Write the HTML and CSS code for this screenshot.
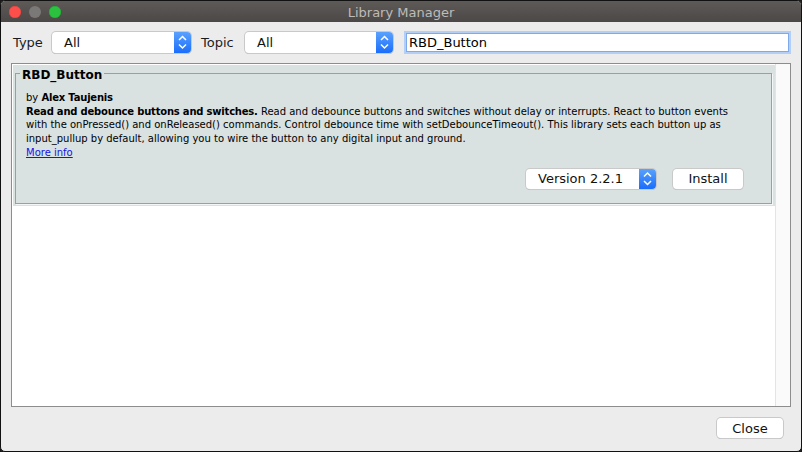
FILE: index.html
```html
<!DOCTYPE html>
<html>
<head>
<meta charset="utf-8">
<title>Library Manager</title>
<link rel="stylesheet" href="styles.css">
</head>
<body>
<div class="window">
  <div class="titlebar">
    <div class="lights">
      <span class="light red"></span>
      <span class="light gray"></span>
      <span class="light green"></span>
    </div>
    <div class="title">Library Manager</div>
    <div></div>
  </div>
  <div class="filters">
    <span class="label label-type">Type</span>
    <div class="select sel-type">
      <span class="sel-text">All</span>
      <span class="sel-arrow"><svg width="17" height="21" viewBox="0 0 17 21"><path d="M5 8 L8.5 4.5 L12 8 M5 12.5 L8.5 16 L12 12.5" fill="none" stroke="#fff" stroke-width="1.5"/></svg></span>
    </div>
    <span class="label label-topic">Topic</span>
    <div class="select sel-topic">
      <span class="sel-text">All</span>
      <span class="sel-arrow"><svg width="17" height="21" viewBox="0 0 17 21"><path d="M5 8 L8.5 4.5 L12 8 M5 12.5 L8.5 16 L12 12.5" fill="none" stroke="#fff" stroke-width="1.5"/></svg></span>
    </div>
    <div class="search">RBD_Button</div>
  </div>
  <div class="list">
    <div class="items">
      <div class="item">
        <fieldset class="lib">
          <legend>RBD_Button</legend>
          <div class="desc">
            <div>by <b>Alex Taujenis</b></div>
            <div><b>Read and debounce buttons and switches.</b> Read and debounce buttons and switches without delay or interrupts. React to button events<br>with the onPressed() and onReleased() commands. Control debounce time with setDebounceTimeout(). This library sets each button up as<br>input_pullup by default, allowing you to wire the button to any digital input and ground.</div>
            <div><a href="#" class="more">More info</a></div>
          </div>
          <div class="actions">
            <div class="select sel-version">
              <span class="sel-text">Version 2.2.1</span>
              <span class="sel-arrow"><svg width="17" height="20" viewBox="0 0 17 20"><path d="M5 7.5 L8.5 4 L12 7.5 M5 12 L8.5 15.5 L12 12" fill="none" stroke="#fff" stroke-width="1.5"/></svg></span>
            </div>
            <button class="btn btn-install">Install</button>
          </div>
        </fieldset>
      </div>
    </div>
    <div class="scrollbar"></div>
  </div>
  <div class="footer">
    <button class="btn btn-close">Close</button>
  </div>
</div>
</body>
</html>
```

FILE: styles.css
```css
* { box-sizing: border-box; }
html, body { margin: 0; padding: 0; background: #1a1a1a; }
body { width: 802px; height: 452px; font-family: "DejaVu Sans", sans-serif; }

.window {
  width: 802px; height: 452px;
  display: flex; flex-direction: column;
  background: #ececec;
  border: 1px solid #111;
  border-radius: 5px;
  overflow: hidden;
}

.titlebar {
  height: 21px; flex: none;
  display: grid; grid-template-columns: 1fr auto 1fr; align-items: center;
  background: linear-gradient(#5d5a58, #4c4847);
}
.lights { display: flex; gap: 8px; padding-left: 8px; }
.light { width: 12px; height: 12px; border-radius: 50%; display: block; }
.red { background: #fc4f4b; box-shadow: inset 0 0 0 0.5px #e0443f; }
.gray { background: #7b7978; }
.green { background: #2ac23e; box-shadow: inset 0 0 0 0.5px #22a834; }
.title { color: #bebbb9; font-size: 13px; padding-top: 1px; }

.filters {
  flex: none; height: 21px; margin-top: 10px;
  display: flex; align-items: center;
  padding: 0 12px;
  font-size: 13px; color: #1c1c1c;
}
.label { flex: none; }
.label-type { width: 31px; margin-right: 8px; }
.label-topic { width: 34px; margin-left: 10px; margin-right: 10px; }

.select {
  display: flex; align-items: stretch;
  height: 21px;
  background: #fff;
  border-radius: 4px;
  box-shadow: 0 0 0 1px #c9c9c9, 0 1px 0 0 #b5b5b5;
  font-size: 13px; color: #111;
  flex: none;
}
.sel-text { flex: 1; padding-left: 12px; line-height: 21px; }
.sel-arrow {
  width: 17px; flex: none;
  background: linear-gradient(#5aa2fd, #1a6dfb);
  border-radius: 0 4px 4px 0;
  display: flex; align-items: center;
}
.sel-arrow svg { display: block; }
.sel-type { width: 139px; }
.sel-topic { width: 148px; }

.search {
  flex: 1; margin-left: 13px;
  height: 19px; line-height: 17px;
  background: #fff;
  border: 1px solid #7ea9ea;
  box-shadow: 0 0 0 2px #b3cff6;
  padding-left: 2px;
  font-size: 13px; color: #000;
}

.list {
  flex: 1;
  margin: 10px 10px 0 10px;
  border: 1px solid #8d8d8d;
  background: #fff;
  display: flex;
}
.items { flex: 1; padding: 1px 0 0 1px; }
.scrollbar { width: 15px; flex: none; background: #fafafa; border-left: 1px solid #e4e4e4; }

.item {
  background: #d9e1e1;
  padding: 0 3px 2px 2px;
}
.lib {
  margin: 0;
  border: 1px solid #9e9e9e;
  box-shadow: 1px 1px 0 #f4f7f7;
  padding: 10px 10px 14px 10px;
}
.lib legend {
  font-size: 12px; font-weight: bold; line-height: 12px;
  padding: 4px 2px 0 2px;
  margin-left: -6px;
  color: #000;
}
.desc { font-size: 10px; line-height: 13.7px; color: #000; white-space: nowrap; }
.desc b { font-weight: bold; letter-spacing: -0.2px; }
.more { color: #1414e6; text-decoration: underline; }

.actions {
  display: flex; justify-content: flex-end; align-items: center;
  gap: 17px;
  padding-right: 18px;
  margin-top: 9px;
}
.sel-version { width: 130px; height: 20px; }
.sel-version .sel-text { line-height: 20px; }

.btn {
  font-family: "DejaVu Sans", sans-serif;
  font-size: 13px; color: #111;
  background: #fff;
  border: none;
  border-radius: 4px;
  box-shadow: 0 0 0 1px #c9c9c9, 0 1px 0 0 #b5b5b5;
  height: 20px; padding: 0;
}
.btn-install { width: 70px; }

.footer {
  flex: none;
  display: flex; justify-content: flex-end;
  padding: 11px 18px 13px 0;
}
.btn-close { width: 66px; }
```
